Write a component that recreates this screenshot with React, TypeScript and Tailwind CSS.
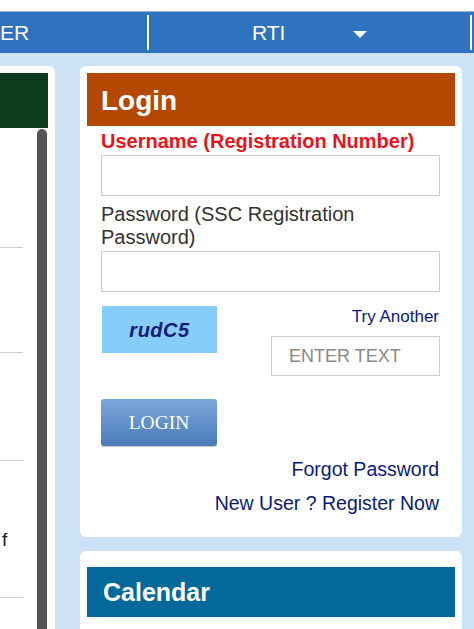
import React from 'react';

function LeftPanel() {
  return (
    <div className="w-[55px] shrink-0 bg-white rounded-tr-[6px] pt-[7px] flex flex-col h-[570px]">
      <div className="h-[55px] w-[48px] bg-[#0b3d1e]" />
      <div className="relative flex-1">
        <div className="absolute left-[37px] top-[1px] w-[10px] h-[600px] rounded-t-full bg-[#555555]" />
        <div className="w-[23px] h-[120px] border-b border-[#d0d0d0]" />
        <div className="w-[23px] h-[105px] border-b border-[#d0d0d0]" />
        <div className="w-[23px] h-[108px] border-b border-[#d0d0d0]" />
        <div className="w-[23px] h-[137px] border-b border-[#d0d0d0] flex items-end pb-[43px]">
          <span className="pl-[2px] text-[19px] text-[#222]">f</span>
        </div>
      </div>
    </div>
  );
}

function LoginCard() {
  return (
    <div className="w-[382px] bg-white rounded-[6px] pt-[7px] px-[7px] pb-[23px]">
      <div className="h-[53px] bg-[#b44800] flex items-center pl-[14px]">
        <h2 className="text-white font-bold text-[28px] leading-none mt-[2px]">Login</h2>
      </div>
      <div className="px-[14px]">
        <div className="mt-[4px] text-[20px] font-bold text-[#e8141c] leading-[22px]">
          Username (Registration Number)
        </div>
        <input
          type="text"
          className="mt-[3px] block w-[339px] h-[41px] border border-[#cccccc] outline-none"
        />
        <div className="mt-[7px] text-[20px] text-[#333333] leading-[23px]">
          Password (SSC Registration
          <br />
          Password)
        </div>
        <input
          type="password"
          className="mt-[2px] block w-[339px] h-[41px] border border-[#cccccc] outline-none"
        />
        <div className="mt-[14px] flex justify-between">
          <div className="ml-[1px] w-[115px] h-[47px] bg-[#87cdfb] flex items-center justify-center">
            <span className="italic font-bold text-[20px] text-[#141a78] tracking-[0.5px]">rudC5</span>
          </div>
          <div className="flex flex-col items-end mr-[1px]">
            <a className="mt-[1px] text-[17px] text-[#0a1a80] leading-[20px] mr-[1px]">Try Another</a>
            <input
              type="text"
              placeholder="ENTER TEXT"
              className="mt-[9px] w-[169px] h-[40px] border border-[#cccccc] px-[17px] text-[18px] placeholder:text-[#8a8a8a] outline-none"
            />
          </div>
        </div>
        <button className="mt-[23px] w-[116px] h-[47px] rounded-[3px] bg-gradient-to-b from-[#7ca7dc] to-[#4b7bb8] text-white text-[19.5px] shadow-[0_1px_1px_rgba(0,0,0,0.25)] [font-family:'Liberation_Serif',serif]">
          LOGIN
        </button>
        <div className="mt-[12px] flex flex-col items-end text-[19.5px] text-[#0a1a80] leading-[22px] pr-[2px]">
          <a>Forgot Password</a>
          <a className="mt-[12px]">New User ? Register Now</a>
        </div>
      </div>
    </div>
  );
}

function CalendarCard() {
  return (
    <div className="mt-[14px] w-[382px] bg-white rounded-t-[6px] pt-[16px] px-[7px] h-[100px]">
      <div className="h-[50px] bg-[#03689a] flex items-center pl-[16px]">
        <h2 className="text-white font-bold text-[25px] leading-none">Calendar</h2>
      </div>
    </div>
  );
}

export default function App() {
  return (
    <div className="w-[474px] h-[629px] overflow-hidden bg-[#cde2f5] [font-family:'Liberation_Sans',Arial,sans-serif]">
      <div className="h-[11px] bg-white" />
      <div className="h-[42px] bg-[#2f73c0] border-t border-[#9ab5d3] flex items-center text-white text-[21px]">
        <div className="w-[147px] h-full flex items-center">
          <span>ER</span>
        </div>
        <div className="w-[2px] h-[35px] bg-white" />
        <div className="w-[321px] h-full flex items-center pl-[103px]">
          <span>RTI</span>
          <svg className="ml-[68px] mt-[4px]" width="14" height="8" viewBox="0 0 14 8">
            <path d="M0 0 L14 0 L7 7 Z" fill="white" />
          </svg>
        </div>
        <div className="w-[2px] h-[35px] bg-white" />
      </div>
      <div className="flex pt-[13px] gap-[25px]">
        <LeftPanel />
        <div>
          <LoginCard />
          <CalendarCard />
        </div>
      </div>
    </div>
  );
}
